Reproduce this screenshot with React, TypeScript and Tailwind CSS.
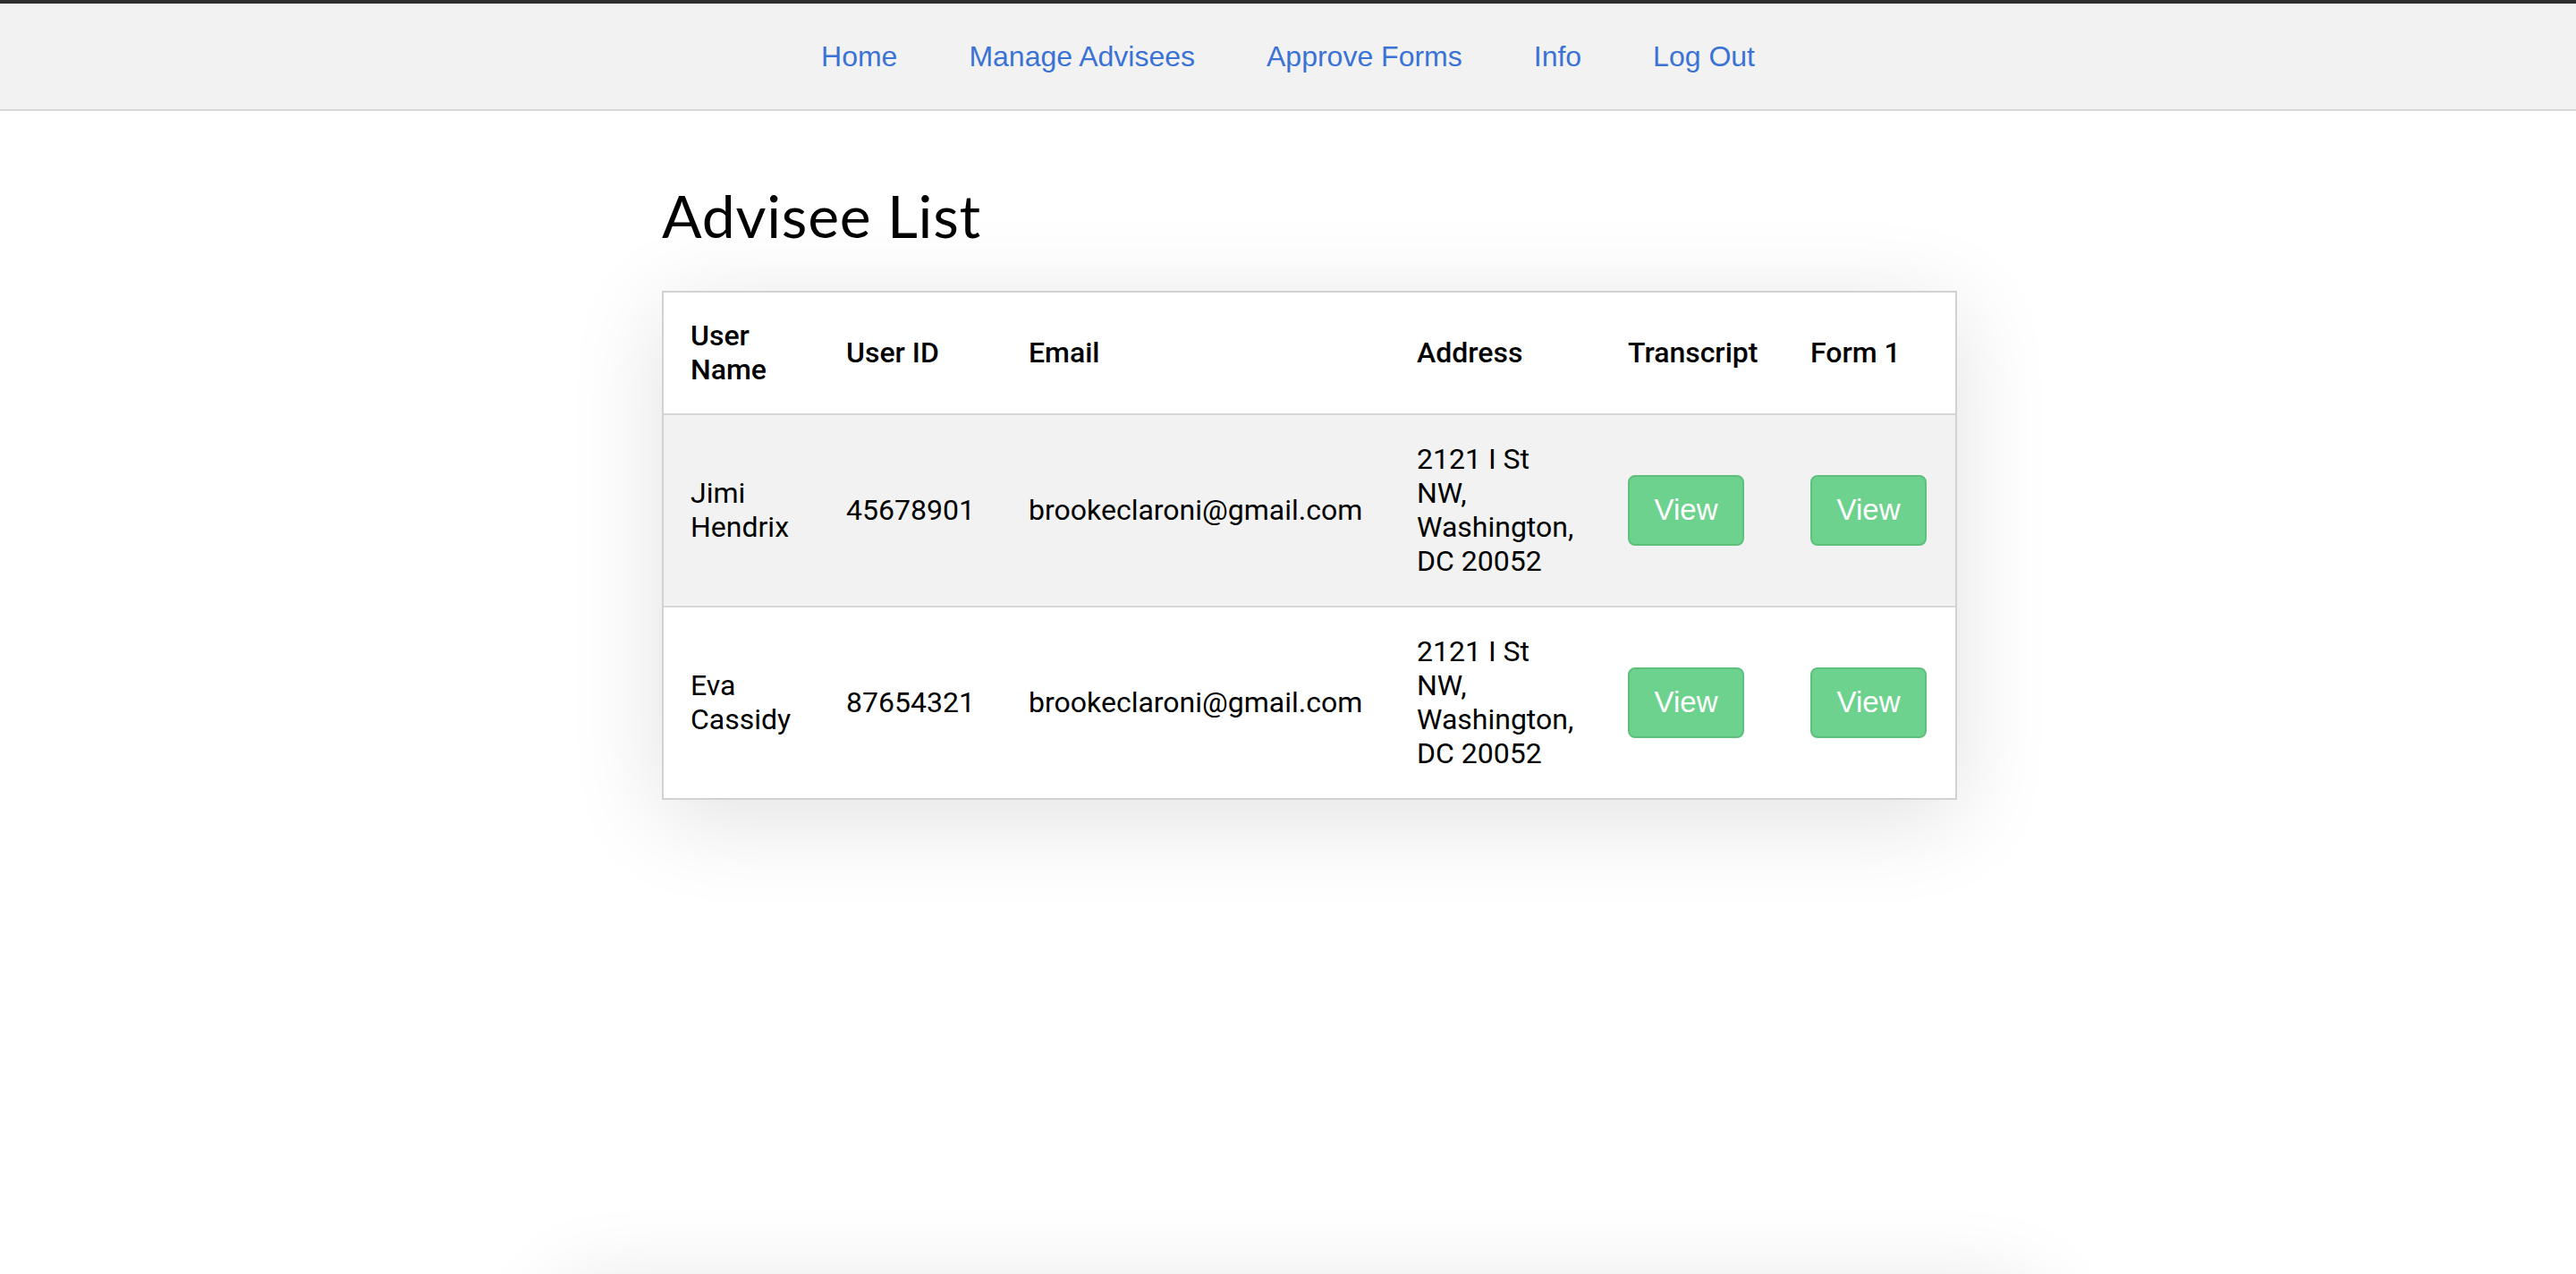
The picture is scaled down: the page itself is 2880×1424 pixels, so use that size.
const NAV = ["Home", "Manage Advisees", "Approve Forms", "Info", "Log Out"];

const ADVISEES = [
  { name: "Jimi Hendrix", id: "45678901", email: "brookeclaroni@gmail.com", address: "2121 I St NW, Washington, DC 20052" },
  { name: "Eva Cassidy", id: "87654321", email: "brookeclaroni@gmail.com", address: "2121 I St NW, Washington, DC 20052" },
];

function ViewButton() {
  return (
    <button className="w-[130px] h-[79px] bg-[#6cd28d] border-2 border-[#5fc07e] rounded-[8px] text-white text-[33px] font-['Liberation_Sans',Arial,sans-serif]">
      View
    </button>
  );
}

export default function App() {
  return (
    <div className="min-h-screen bg-white text-black">
      <div className="h-[4px] bg-[#2e2e2f]" />
      {/* top nav */}
      <nav className="h-[120px] bg-[#f2f2f2] border-b-2 border-[#d6d6d6] flex items-center justify-center">
        {NAV.map((n) => (
          <a
            key={n}
            href="#"
            className="px-[40px] text-[32px] text-[#3b72d5] font-['Liberation_Sans',Arial,sans-serif]"
          >
            {n}
          </a>
        ))}
      </nav>

      <main className="pl-[740px] pt-[84px]">
        <h1 className="text-[66px] leading-none font-['Lato',sans-serif] tracking-[0.75px] mb-[51px]">
          Advisee List
        </h1>

        <div className="w-[1448px] border-2 border-[#d2d2d2] bg-white shadow-[0_20px_100px_rgba(0,0,0,0.12)] font-['Roboto',sans-serif] text-[32px] leading-[38.25px]">
          <table className="w-full table-fixed border-collapse">
            <colgroup>
              <col className="w-[174px]" />
              <col className="w-[204px]" />
              <col className="w-[434px]" />
              <col className="w-[236px]" />
              <col className="w-[204px]" />
              <col className="w-[192px]" />
            </colgroup>
            <thead>
              <tr>
                {["User Name", "User ID", "Email", "Address", "Transcript", "Form 1"].map((h) => (
                  <th key={h} className="px-[30px] py-[29px] text-left align-middle font-medium">
                    {h}
                  </th>
                ))}
              </tr>
            </thead>
            <tbody>
              {ADVISEES.map((a, i) => (
                <tr key={a.id} className={`border-t-2 border-[#d6d6d6] ${i === 0 ? "bg-[#f2f2f2]" : "bg-white"}`}>
                  <td className="px-[30px] py-[30px] align-middle">{a.name}</td>
                  <td className="px-[30px] py-[30px] align-middle">{a.id}</td>
                  <td className="px-[30px] py-[30px] align-middle">{a.email}</td>
                  <td className="px-[30px] py-[30px] align-middle">{a.address}</td>
                  <td className="px-[30px] py-[30px] align-middle">
                    <ViewButton />
                  </td>
                  <td className="px-[30px] py-[30px] align-middle">
                    <ViewButton />
                  </td>
                </tr>
              ))}
            </tbody>
          </table>
        </div>
      </main>

      {/* next section, just below the fold */}
      <section className="ml-[630px] mt-[536px] w-[1640px] h-[400px] bg-white shadow-[0_20px_100px_rgba(0,0,0,0.14)]" />
    </div>
  );
}
